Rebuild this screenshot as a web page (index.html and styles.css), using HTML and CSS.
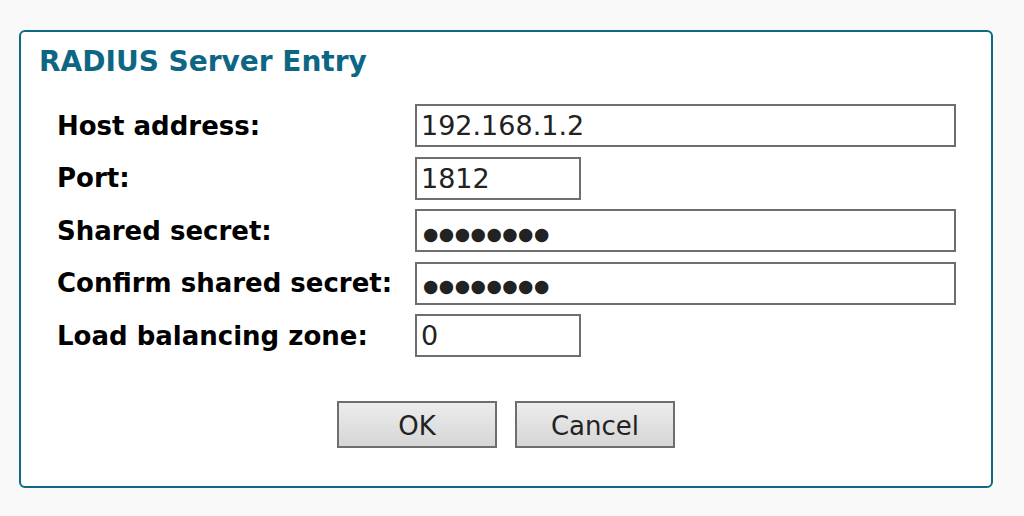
FILE: index.html
```html
<!DOCTYPE html>
<html lang="en">
<head>
<meta charset="utf-8">
<title>RADIUS Server Entry</title>
<link rel="stylesheet" href="styles.css">
</head>
<body>
<div class="panel">
  <h1 class="title">RADIUS Server Entry</h1>
  <form class="form">
    <div class="grid">
      <label class="label" for="host">Host address:</label>
      <input class="field wide" id="host" type="text" value="192.168.1.2">
      <label class="label" for="port">Port:</label>
      <input class="field narrow" id="port" type="text" value="1812">
      <label class="label" for="secret">Shared secret:</label>
      <input class="field wide secret" id="secret" type="text" value="●●●●●●●●">
      <label class="label" for="confirm">Confirm shared secret:</label>
      <input class="field wide secret" id="confirm" type="text" value="●●●●●●●●">
      <label class="label" for="zone">Load balancing zone:</label>
      <input class="field narrow" id="zone" type="text" value="0">
    </div>
    <div class="buttons">
      <button type="button" class="btn">OK</button>
      <button type="button" class="btn">Cancel</button>
    </div>
  </form>
</div>
</body>
</html>
```
FILE: styles.css
```css
html, body {
  margin: 0;
  padding: 0;
  background: #f9f9f9;
}
body {
  padding: 30px 0 0 19px;
  font-family: "DejaVu Sans", Verdana, sans-serif;
  color: #000;
}
.panel {
  box-sizing: border-box;
  width: 974px;
  height: 458px;
  background: #fff;
  border: 2px solid #0e6a82;
  border-radius: 6px;
  padding: 14px 0 0 18px;
}
.title {
  margin: 0;
  font-size: 28px;
  line-height: 32px;
  font-weight: bold;
  color: #0d6784;
}
.form {
  margin: 26px 0 0 0;
}
.grid {
  display: grid;
  grid-template-columns: 358px 1fr;
  row-gap: 9.5px;
  padding-left: 18px;
  align-items: center;
}
.label {
  font-size: 26px;
  font-weight: bold;
  line-height: 30px;
}
.field {
  box-sizing: border-box;
  height: 43px;
  border: 2px solid #6e6e6e;
  border-radius: 0;
  padding: 0 4px;
  font-family: "DejaVu Sans", Verdana, sans-serif;
  font-size: 27px;
  color: #222;
  background: #fff;
  outline: none;
  margin: 0;
}
.secret {
  font-size: 17.6px;
  letter-spacing: 0.5px;
  padding-top: 6px;
  padding-left: 6px;
}
.wide { width: 541px; }
.narrow { width: 166px; }
.buttons {
  display: flex;
  justify-content: center;
  gap: 18px;
  margin-top: 43.5px;
  padding-right: 18px;
}
.btn {
  box-sizing: border-box;
  width: 160px;
  height: 47px;
  border: 2px solid #6e6e6e;
  border-radius: 0;
  background: linear-gradient(#ececec, #d6d6d6);
  font-family: "DejaVu Sans", Verdana, sans-serif;
  font-size: 26px;
  color: #222;
  padding: 3px 0 0 0;
  margin: 0;
}
```
